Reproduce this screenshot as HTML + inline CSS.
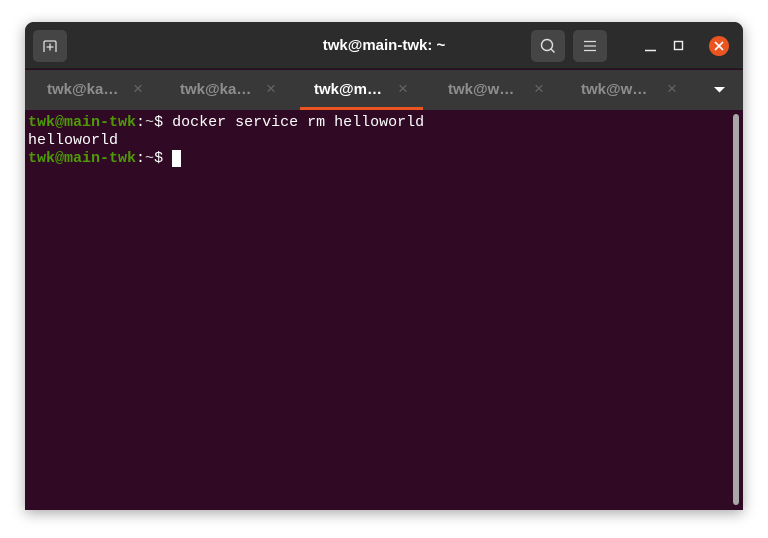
<!DOCTYPE html>
<html><head><style>
*{margin:0;padding:0;box-sizing:border-box}
body{width:768px;height:538px;background:#fff;position:relative;overflow:hidden;font-family:"Liberation Sans",sans-serif}
.win{position:absolute;left:25px;top:22px;width:718px;height:488px;border-radius:9px 9px 0 0;overflow:hidden;background:#300a24;box-shadow:0 3px 14px rgba(0,0,0,.35)}
.hdr{position:absolute;left:0;top:0;width:718px;height:47px;background:#2c2c2c;border-bottom:1px solid #1e1e1e}
.btn{position:absolute;top:8px;width:34px;height:32px;background:#454545;border-radius:5px}
.title{position:absolute;left:0;width:718px;top:15px;text-align:center;color:#fff;font-weight:bold;font-size:15px}
.tabs{position:absolute;left:0;top:48px;width:718px;height:40px;background:#383838}
.tab{position:absolute;top:0;height:40px;width:133px;font-weight:bold;font-size:15px;color:#8e8e8e}
.tab span{position:absolute;left:22px;top:11px}
.tab i{position:absolute;left:108px;top:9px;font-style:normal;font-weight:normal;color:#666;font-size:17px}
.tab.act{color:#fff}
.tab.act:after{content:"";position:absolute;left:0;right:0;bottom:0;height:3px;background:#e95420}
.term{position:absolute;left:3px;top:92px;font-family:"Liberation Mono",monospace;font-size:15px;line-height:18px;color:#fff;white-space:pre}
.g{color:#4e9a06;font-weight:bold}.b{color:#d3d7cf}
.sb{position:absolute;left:708px;top:92px;width:6px;height:391px;background:#a8a8a8;border-radius:3px}
</style></head><body>
<div class="win">
<div class="hdr">
<div class="btn" style="left:8px"><svg width="34" height="32"><path d="M11 22V12.5Q11 11 12.5 11H21.5Q23 11 23 12.5V22" fill="none" stroke="#ddd" stroke-width="1.3"/><path d="M17 13.5V20.5M13.5 17H20.5" stroke="#ddd" stroke-width="1.3"/></svg></div>
<div class="title">twk@main-twk: ~</div>
<div class="btn" style="left:506px"><svg width="34" height="32"><circle cx="16" cy="15" r="5.5" fill="none" stroke="#ddd" stroke-width="1.4"/><path d="M20 19L23.5 22.5" stroke="#ddd" stroke-width="1.5"/></svg></div>
<div class="btn" style="left:548px"><svg width="34" height="32"><path d="M11 11.5H23M11 16H23M11 20.5H23" stroke="#ddd" stroke-width="1.3"/></svg></div>
<svg style="position:absolute;left:600px;top:8px" width="118" height="32"><path d="M20 20.5H31" stroke="#eee" stroke-width="1.5"/><rect x="49.5" y="11.5" width="8" height="8" fill="none" stroke="#eee" stroke-width="1.4"/><circle cx="94" cy="16" r="10" fill="#e95420"/><path d="M90 12L98 20M98 12L90 20" stroke="#fff" stroke-width="1.6"/></svg>
</div>
<div class="tabs">
<div class="tab" style="left:0"><span>twk@ka…</span><i>×</i></div>
<div class="tab" style="left:133px"><span>twk@ka…</span><i>×</i></div>
<div class="tab act" style="left:275px;width:123px"><span style="left:14px">twk@m…</span><i style="left:98px">×</i></div>
<div class="tab" style="left:401px"><span>twk@w…</span><i>×</i></div>
<div class="tab" style="left:534px"><span>twk@w…</span><i>×</i></div>
<svg style="position:absolute;left:688px;top:16px" width="14" height="8"><path d="M1 1H12L6.5 6.5Z" fill="#fff"/></svg>
</div>
<div class="term"><span class="g">twk@main-twk</span>:<span class="b">~</span>$ docker service rm helloworld
helloworld
<span class="g">twk@main-twk</span>:<span class="b">~</span>$ <span style="background:#fff"> </span></div>
<div class="sb"></div>
</div>
</body></html>
